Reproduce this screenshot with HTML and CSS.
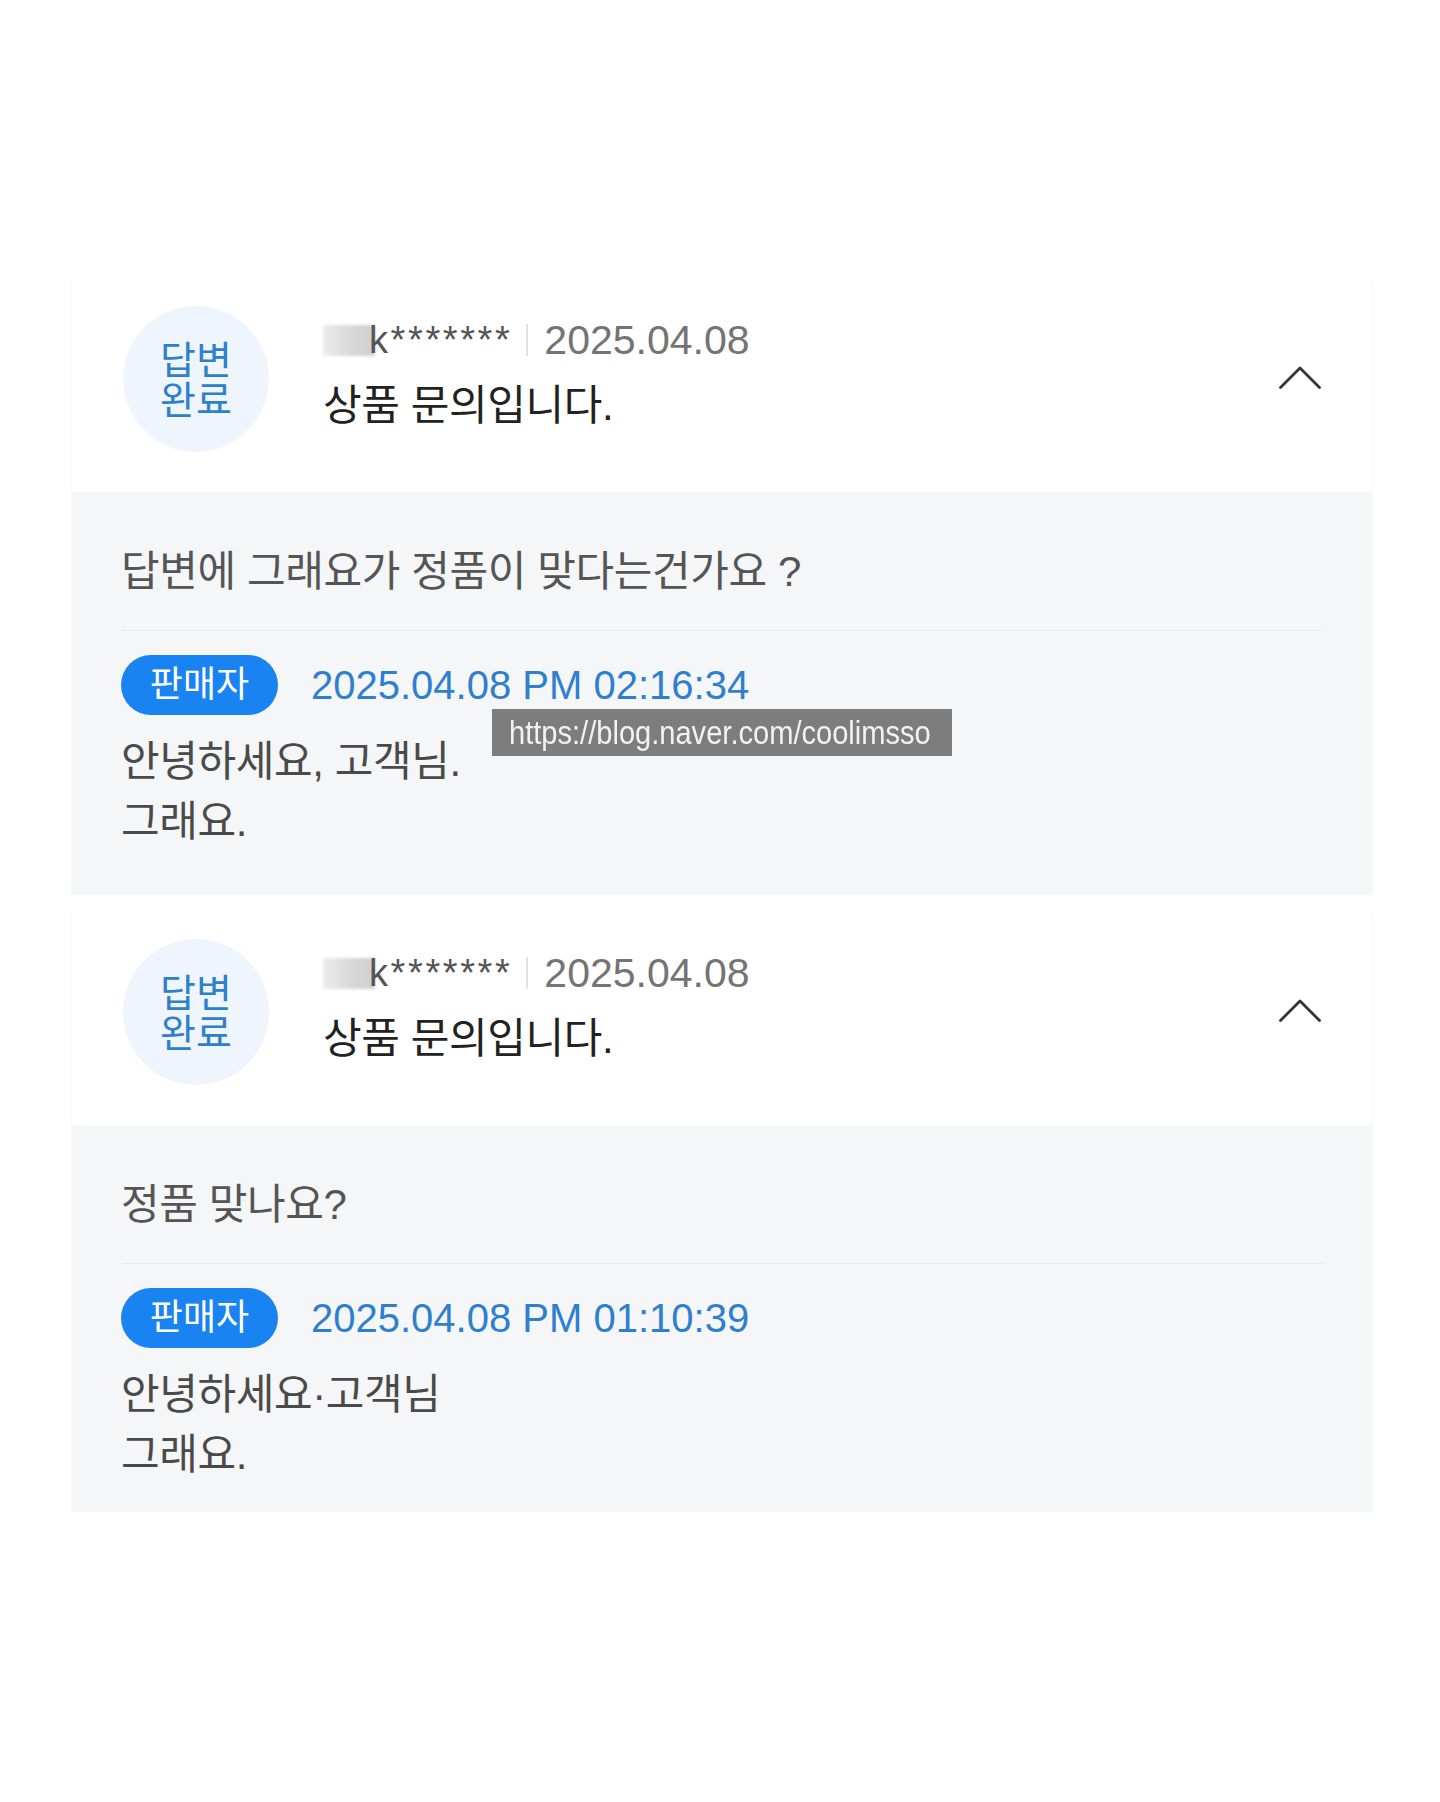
FILE: index.html
```html
<!DOCTYPE html>
<html lang="ko">
<head>
<meta charset="utf-8">
<title>상품 문의</title>
<link rel="stylesheet" href="styles.css">
</head>
<body>
<main class="qna-list">

  <article class="qna">
    <header class="qna-head">
      <div class="status"><span>답변</span><span>완료</span></div>
      <div class="head-text">
        <div class="meta">
          <span class="blur"></span><span class="user">k*******</span><span class="sep"></span><span class="date">2025.04.08</span>
        </div>
        <div class="title">상품 문의입니다.</div>
      </div>
      <svg class="chevron" width="42" height="23" viewBox="0 0 42 23" aria-hidden="true">
        <polyline points="1.5,21.5 21,2 40.5,21.5" fill="none" stroke="#333" stroke-width="2.8" stroke-linecap="round" stroke-linejoin="round"/>
      </svg>
    </header>
    <section class="qna-body qna-body--first">
      <p class="question">답변에 그래요가 정품이 맞다는건가요 ?</p>
      <div class="divider"></div>
      <div class="seller-row">
        <span class="badge">판매자</span>
        <span class="answer-date">2025.04.08 PM 02:16:34</span>
      </div>
      <p class="answer">안녕하세요, 고객님.<br>그래요.</p>
      <div class="watermark"><span class="watermark-text">https://blog.naver.com/coolimsso</span></div>
    </section>
  </article>

  <article class="qna">
    <header class="qna-head">
      <div class="status"><span>답변</span><span>완료</span></div>
      <div class="head-text">
        <div class="meta">
          <span class="blur"></span><span class="user">k*******</span><span class="sep"></span><span class="date">2025.04.08</span>
        </div>
        <div class="title">상품 문의입니다.</div>
      </div>
      <svg class="chevron" width="42" height="23" viewBox="0 0 42 23" aria-hidden="true">
        <polyline points="1.5,21.5 21,2 40.5,21.5" fill="none" stroke="#333" stroke-width="2.8" stroke-linecap="round" stroke-linejoin="round"/>
      </svg>
    </header>
    <section class="qna-body">
      <p class="question">정품 맞나요?</p>
      <div class="divider"></div>
      <div class="seller-row">
        <span class="badge">판매자</span>
        <span class="answer-date">2025.04.08 PM 01:10:39</span>
      </div>
      <p class="answer">안녕하세요·고객님<br>그래요.</p>
    </section>
  </article>

</main>
</body>
</html>
```

FILE: styles.css
```css
* { box-sizing: border-box; }

html, body {
  margin: 0;
  padding: 0;
  background: #ffffff;
}

body {
  font-family: "Liberation Sans", "Noto Sans CJK KR", sans-serif;
  color: #333;
}

.qna-list {
  width: 1302px;
  margin: 281px 0 0 71px;
  display: flex;
  flex-direction: column;
  gap: 19px;
}

.qna {
  display: flex;
  flex-direction: column;
}

.qna-head {
  height: 211px;
  display: flex;
  align-items: center;
  padding: 25px 51px 40px 51px;
  background: #fff;
  border-left: 1px solid #f8f8f8;
  border-right: 1px solid #f8f8f8;
}

.status {
  width: 146px;
  height: 146px;
  flex: none;
  border-radius: 50%;
  background: #eef5fc;
  color: #2f80cc;
  font-size: 39px;
  line-height: 40px;
  display: flex;
  flex-direction: column;
  align-items: center;
  justify-content: center;
  padding-top: 4px;
}

.head-text {
  flex: 1;
  margin-left: 54px;
  display: flex;
  flex-direction: column;
  gap: 12px;
  padding-bottom: 8px;
}

.meta {
  display: flex;
  align-items: center;
  height: 50px;
  font-size: 41px;
  color: #707070;
}

.blur {
  width: 52px;
  height: 31px;
  margin-right: -6px;
  background: linear-gradient(90deg, #ececec 0%, #d6d6d6 60%, #cfcfcf 100%);
  filter: blur(1.5px);
}

.user {
  font-size: 38px;
  color: #555;
  letter-spacing: 2.6px;
  position: relative;
}

.sep {
  width: 2px;
  height: 32px;
  background: #e2e2e2;
  margin: 0 16px 0 14px;
}

.date {
  color: #747474;
}

.title {
  font-size: 42px;
  line-height: 58px;
  letter-spacing: -0.4px;
  color: #222;
}

.chevron {
  flex: none;
  display: block;
  margin-bottom: 4px;
}

.qna-body {
  position: relative;
  background: #f5f6f8;
  padding: 50px 49px 27px 50px;
}

.qna-body--first {
  padding-bottom: 43px;
}

.question {
  margin: 0;
  font-size: 42px;
  line-height: 60px;
  letter-spacing: -0.4px;
  color: #555;
}

.divider {
  height: 1px;
  background: #e9eaed;
  margin-top: 28px;
}

.seller-row {
  margin-top: 24px;
  height: 60px;
  display: flex;
  align-items: center;
}

.badge {
  width: 157px;
  height: 60px;
  border-radius: 30px;
  background: #1a83f2;
  color: #fff;
  font-size: 36px;
  line-height: 60px;
  text-align: center;
}

.answer-date {
  margin-left: 33px;
  font-size: 40px;
  color: #2f7fd0;
}

.answer {
  margin: 17px 0 0 0;
  font-size: 42px;
  line-height: 60px;
  letter-spacing: -0.4px;
  color: #4a4a4a;
}

.watermark {
  position: absolute;
  top: 217px;
  left: 421px;
  width: 460px;
  height: 47px;
  background: #7d7d7d;
  color: #f2f2f2;
  padding-left: 17px;
  white-space: nowrap;
  overflow: hidden;
}

.watermark-text {
  display: inline-block;
  font-family: "Liberation Sans", sans-serif;
  font-size: 34px;
  line-height: 47px;
  transform: scaleX(0.855);
  transform-origin: left center;
}
```
